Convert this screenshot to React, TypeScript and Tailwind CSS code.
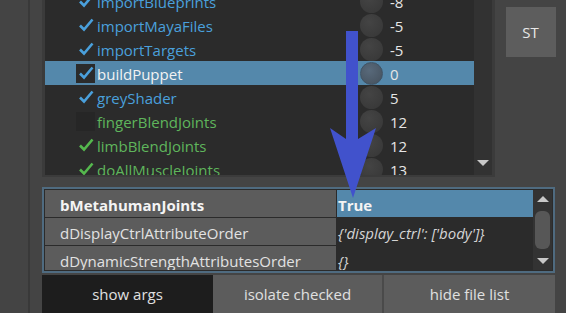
import React from 'react';

type Step = {
  name: string;
  value: string;
  color: 'blue' | 'green';
  checked: boolean;
  selected?: boolean;
};

const steps: Step[] = [
  { name: 'importBlueprints', value: '-8', color: 'blue', checked: true },
  { name: 'importMayaFiles', value: '-5', color: 'blue', checked: true },
  { name: 'importTargets', value: '-5', color: 'blue', checked: true },
  { name: 'buildPuppet', value: '0', color: 'blue', checked: true, selected: true },
  { name: 'greyShader', value: '5', color: 'blue', checked: true },
  { name: 'fingerBlendJoints', value: '12', color: 'green', checked: false },
  { name: 'limbBlendJoints', value: '12', color: 'green', checked: true },
  { name: 'doAllMuscleJoints', value: '13', color: 'green', checked: true },
];

const args = [
  { key: 'bMetahumanJoints', value: 'True', selected: true },
  { key: 'dDisplayCtrlAttributeOrder', value: "{'display_ctrl': ['body']}" },
  { key: 'dDynamicStrengthAttributesOrder', value: '{}' },
];

function Check({ color }: { color: string }) {
  return (
    <svg width="16" height="16" viewBox="0 0 16 16">
      <path d="M2 8.5 L6 12.5 L14.5 2.5" fill="none" stroke={color} strokeWidth="2.6" strokeLinejoin="miter" />
    </svg>
  );
}

function StepRow({ step }: { step: Step }) {
  const text = step.selected ? 'text-[#f2f2f2]' : step.color === 'blue' ? 'text-[#4aa0dc]' : 'text-[#5fb55c]';
  const checkColor = step.color === 'blue' ? '#4aa0dc' : '#55b84e';
  return (
    <div className={`flex h-[24px] items-center ${step.selected ? 'bg-[#5488ab]' : ''}`}>
      <div className="w-[31px]" />
      <div
        className={`flex h-[19px] w-[19px] items-center justify-center ${
          step.selected ? 'bg-[#2b2b2b]' : !step.checked ? 'bg-[#262626]' : ''
        }`}
      >
        {step.checked && <Check color={checkColor} />}
      </div>
      <div className={`ml-[2px] w-[263px] pt-[2px] text-[15px] ${text}`}>{step.name}</div>
      <div className="flex w-[23px] justify-center">
        <div
          className={`h-[23px] w-[23px] rounded-full ${
            step.selected
              ? 'border border-[#3f5466] bg-[radial-gradient(circle_at_40%_35%,#58697a,#44505c)]'
              : 'bg-[radial-gradient(circle_at_40%_35%,#444444,#363636)]'
          }`}
        />
      </div>
      <div className="ml-[7px] pt-[2px] text-[15px] text-[#e6e6e6]">{step.value}</div>
    </div>
  );
}

export default function App() {
  return (
    <div
      className="relative flex h-[313px] w-[566px] overflow-hidden bg-[#444444]"
      style={{ fontFamily: '"Open Sans", "Noto Sans", sans-serif' }}
    >
      <div className="w-[28px] shrink-0" />
      <div className="w-[2px] shrink-0 bg-[#393939]" />
      <div className="w-[12px] shrink-0" />

      <div className="flex flex-1 flex-col">
        <div className="flex h-[177px]">
          <div className="flex w-[453px] border-b-[2px] border-l-[3px] border-r-[3px] border-[#3b3b3b] bg-[#2b2b2b]">
            <div className="flex-1 overflow-hidden">
              <div className="mt-[-11px]">
                {steps.map((s) => (
                  <StepRow key={s.name} step={s} />
                ))}
              </div>
            </div>
            <div className="flex w-[18px] flex-col items-center justify-end bg-[#323232] pb-[9px]">
              <div className="h-0 w-0 border-l-[6px] border-r-[6px] border-t-[6px] border-l-transparent border-r-transparent border-t-[#c8c8c8]" />
            </div>
          </div>
          <div className="flex flex-1 justify-center pt-[7px]">
            <div className="flex h-[50px] w-[50px] items-center justify-center bg-[#5d5d5d] text-[15px] text-[#e8e8e8]">
              ST
            </div>
          </div>
        </div>

        <div className="mt-[10px] flex w-[513px] border-2 border-[#4f6b80] bg-[#2b2b2b] p-[1px]">
          <div className="flex h-[80px] flex-1 flex-col gap-[1px] overflow-hidden">
            {args.map((a) => (
              <div key={a.key} className="flex h-[27px] shrink-0 gap-[1px]">
                <div
                  className={`flex w-[291px] items-center bg-[#5c5c5c] pl-[15px] pt-[3px] text-[15px] text-[#e2e2e2] ${
                    a.selected ? 'font-bold text-[#f4f4f4]' : ''
                  }`}
                >
                  {a.key}
                </div>
                <div
                  className={`flex flex-1 items-center pl-[1px] pt-[3px] text-[15px] ${
                    a.selected ? 'bg-[#5488ab] font-bold text-[#f4f4f4]' : 'bg-[#2b2b2b] italic text-[#d4d4d4]'
                  }`}
                >
                  {a.value}
                </div>
              </div>
            ))}
          </div>
          <div className="flex w-[19px] flex-col items-center justify-between bg-[#333333] py-[6px]">
            <div className="h-0 w-0 border-b-[6px] border-l-[6px] border-r-[6px] border-b-[#c8c8c8] border-l-transparent border-r-transparent" />
            <div className="h-[38px] w-[15px] rounded-[6px] bg-[#575757]" />
            <div className="h-0 w-0 border-l-[6px] border-r-[6px] border-t-[6px] border-l-transparent border-r-transparent border-t-[#c8c8c8]" />
          </div>
        </div>

        <div className="mt-[2px] flex h-[40px] w-[513px]">
          <div className="flex w-[171px] items-center justify-center bg-[#1d1d1d] text-[15px] text-[#e0e0e0]">
            show args
          </div>
          <div className="flex w-[171px] items-center justify-center border-r-2 border-[#4a4a4a] bg-[#5c5c5c] text-[15px] text-[#e0e0e0]">
            isolate checked
          </div>
          <div className="flex flex-1 items-center justify-center bg-[#5c5c5c] text-[15px] text-[#e0e0e0]">
            hide file list
          </div>
        </div>
      </div>

      <svg className="pointer-events-none absolute left-0 top-0" width="566" height="313" viewBox="0 0 566 313">
        <path d="M346 31 L358 31 L358 139 L376 128 L353 198 L330 128 L346 139 Z" fill="#4152cc" />
      </svg>
    </div>
  );
}
